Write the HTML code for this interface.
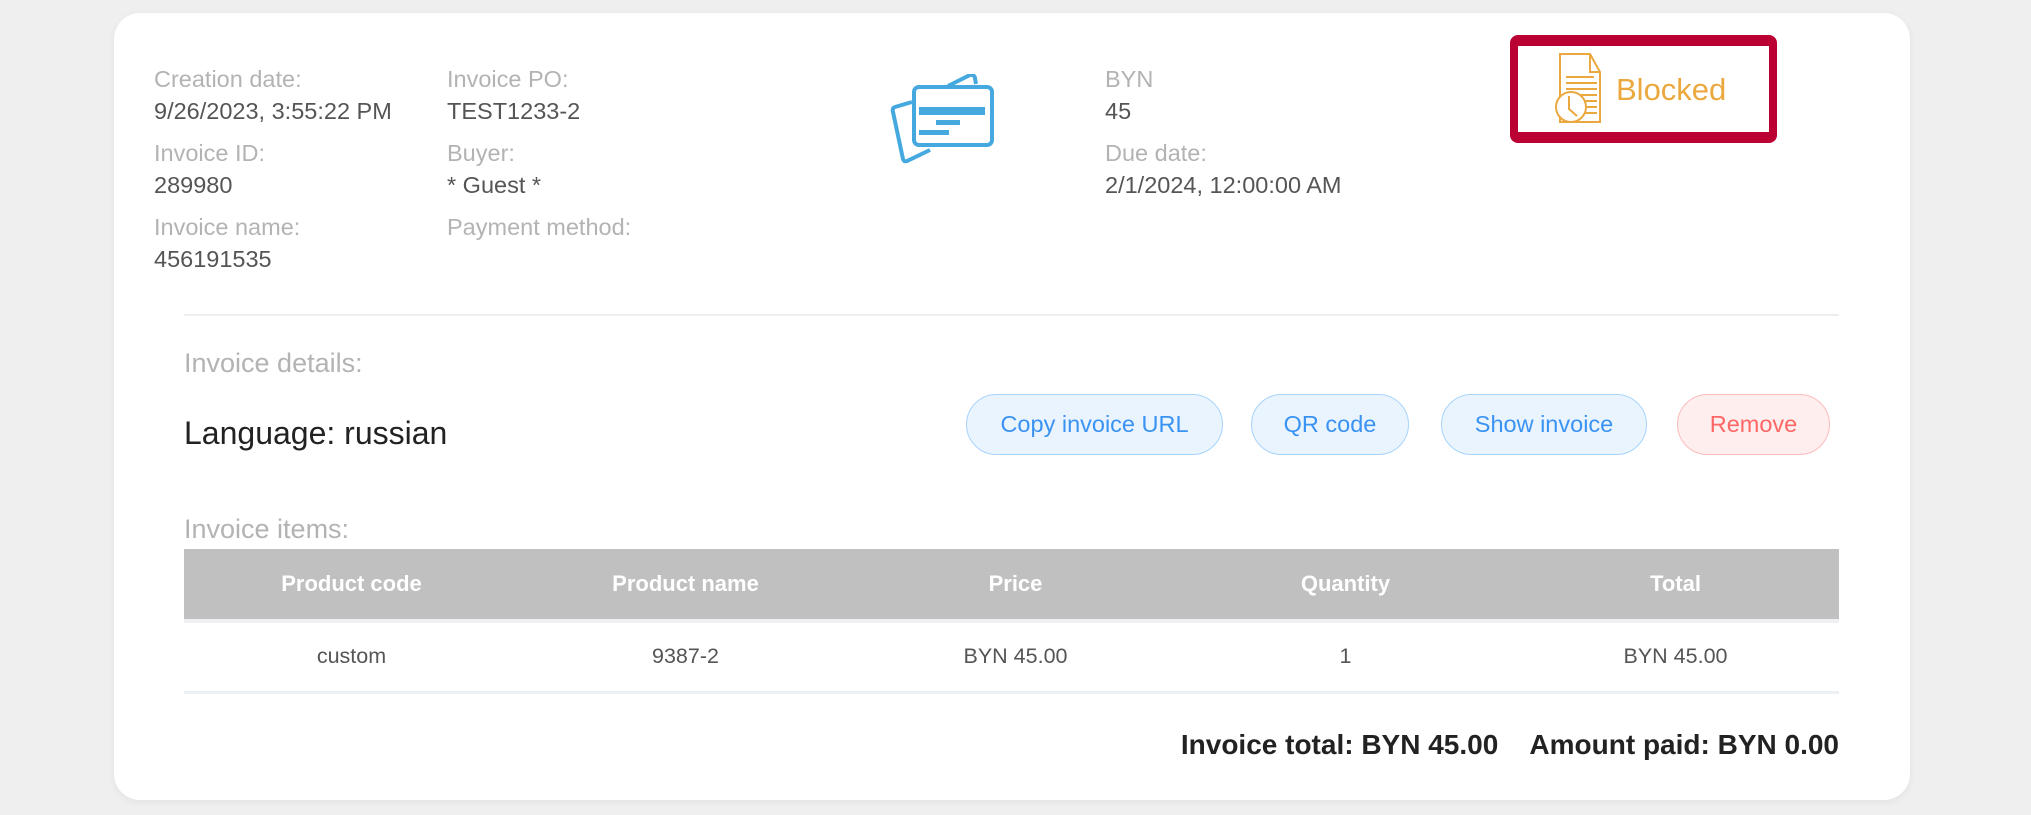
<!DOCTYPE html>
<html><head><style>
*{margin:0;padding:0;box-sizing:border-box}
body{width:2031px;height:815px;background:#efefef;font-family:"Liberation Sans",sans-serif;position:relative;overflow:hidden}
.card{position:absolute;left:114px;top:13px;width:1796px;height:787px;background:#fff;border-radius:26px;box-shadow:0 2px 8px rgba(0,0,0,.06)}
.t{position:absolute;white-space:nowrap;font-size:23.5px}
.l{color:#b3b3b3}.v{color:#555}
.btn{position:absolute;top:394px;height:61px;border-radius:31px;border:1.5px solid #a8d3fb;background:#eaf4fe;color:#3a93f2;font-size:23.5px;display:flex;align-items:center;justify-content:center}
.th{position:absolute;top:549px;height:70px;width:331px;display:flex;align-items:center;justify-content:center;color:#fff;font-weight:bold;font-size:22px}
.td{position:absolute;top:619px;height:74px;width:331px;display:flex;align-items:center;justify-content:center;color:#555;font-size:21.5px}
</style></head><body>
<div class="card"></div>
<div class="t l" style="left:154px;top:66px">Creation date:</div>
<div class="t v" style="left:154px;top:98px">9/26/2023, 3:55:22 PM</div>
<div class="t l" style="left:154px;top:140px">Invoice ID:</div>
<div class="t v" style="left:154px;top:172px">289980</div>
<div class="t l" style="left:154px;top:214px">Invoice name:</div>
<div class="t v" style="left:154px;top:246px">456191535</div>
<div class="t l" style="left:447px;top:66px">Invoice PO:</div>
<div class="t v" style="left:447px;top:98px">TEST1233-2</div>
<div class="t l" style="left:447px;top:140px">Buyer:</div>
<div class="t v" style="left:447px;top:172px">* Guest *</div>
<div class="t l" style="left:447px;top:214px">Payment method:</div>
<svg style="position:absolute;left:890px;top:74px" width="112" height="92" viewBox="0 0 112 92">
<path d="M22 28 L5 33 Q2 34 3 38 L13 85 Q14 88 17 87 L40 76" fill="none" stroke="#45a9e0" stroke-width="4"/>
<path d="M58 12 L80 1 Q84 0 85 4 L86 10" fill="none" stroke="#45a9e0" stroke-width="4"/>
<rect x="24" y="13" width="78" height="58" rx="5" fill="#fff" stroke="#45a9e0" stroke-width="4"/>
<rect x="29" y="33" width="66" height="8" fill="#45a9e0"/>
<rect x="46" y="46" width="24" height="5" fill="#45a9e0"/>
<rect x="29" y="56" width="30" height="5" fill="#45a9e0"/>
</svg>
<div class="t l" style="left:1105px;top:66px">BYN</div>
<div class="t v" style="left:1105px;top:98px">45</div>
<div class="t l" style="left:1105px;top:140px">Due date:</div>
<div class="t v" style="left:1105px;top:172px">2/1/2024, 12:00:00 AM</div>
<div style="position:absolute;left:1510px;top:35px;width:267px;height:108px;border:8px solid #bb0033;border-top-width:11px;border-bottom-width:11px;border-radius:8px;background:#fff"></div>
<svg style="position:absolute;left:1550px;top:50px" width="60" height="80" viewBox="0 0 60 80">
<path d="M10 4 H40 L50 22 V72 H10 Z M40 4 V22 H50" fill="none" stroke="#eba83f" stroke-width="2"/>
<path d="M16 27h28M16 33h31M16 39h31M28 45h19M32 51h15M34 57h13M34 63h13" stroke="#eba83f" stroke-width="2"/>
<circle cx="21" cy="57" r="15" fill="#fff" stroke="#eba83f" stroke-width="2"/>
<path d="M19 46 V59 L27 66" fill="none" stroke="#eba83f" stroke-width="2"/>
</svg>
<div class="t" style="left:1616px;top:72px;font-size:31px;color:#eba83f">Blocked</div>
<div style="position:absolute;left:184px;top:314px;width:1655px;height:2px;background:#eee"></div>
<div class="t l" style="left:184px;top:348px;font-size:27px">Invoice details:</div>
<div class="t" style="left:184px;top:415px;font-size:32px;color:#222">Language: russian</div>
<div class="btn" style="left:966px;width:257px">Copy invoice URL</div>
<div class="btn" style="left:1251px;width:158px">QR code</div>
<div class="btn" style="left:1441px;width:206px">Show invoice</div>
<div class="btn" style="left:1677px;width:153px;border-color:#fbbcbc;background:#feeeee;color:#f66">Remove</div>
<div class="t l" style="left:184px;top:514px;font-size:27px">Invoice items:</div>
<div style="position:absolute;left:184px;top:549px;width:1655px;height:70px;background:#c0c0c0"></div>
<div style="position:absolute;left:184px;top:619px;width:1655px;height:4px;background:#eef0f3"></div>
<div style="position:absolute;left:184px;top:691px;width:1655px;height:3px;background:#edf0f3"></div>
<div class="th" style="left:186px">Product code</div>
<div class="th" style="left:520px">Product name</div>
<div class="th" style="left:850px">Price</div>
<div class="th" style="left:1180px">Quantity</div>
<div class="th" style="left:1510px">Total</div>
<div class="td" style="left:186px">custom</div>
<div class="td" style="left:520px">9387-2</div>
<div class="td" style="left:850px">BYN 45.00</div>
<div class="td" style="left:1180px">1</div>
<div class="td" style="left:1510px">BYN 45.00</div>
<div class="t" style="right:192px;top:729px;font-size:28px;font-weight:bold;color:#222">Invoice total: BYN 45.00&nbsp;&nbsp;&nbsp;&nbsp;Amount paid: BYN 0.00</div>
</body></html>
